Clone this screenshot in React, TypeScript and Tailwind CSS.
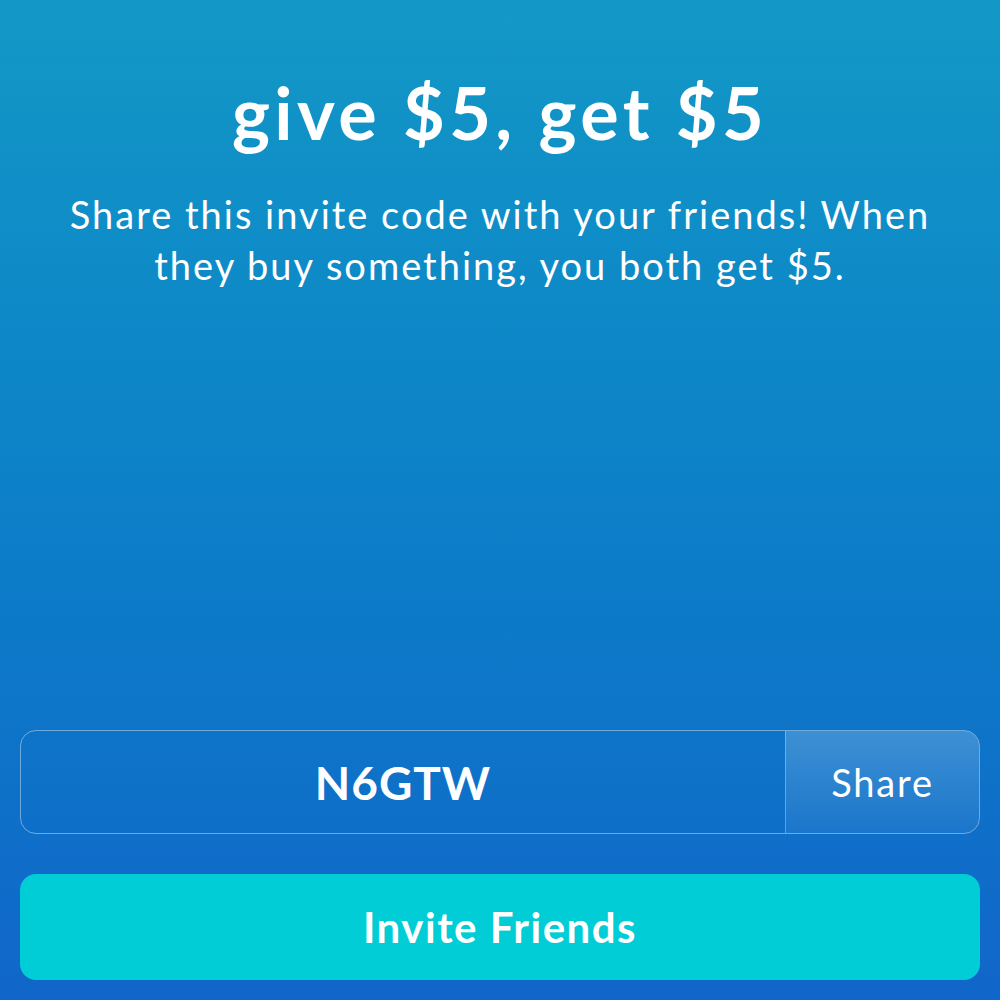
export default function App() {
  return (
    <div
      className="w-[1000px] h-[1000px] flex flex-col bg-gradient-to-b from-[#1398c6] to-[#1166c9] text-white"
      style={{ fontFamily: "Lato, 'Noto Sans', sans-serif" }}
    >
      <div className="flex flex-col items-center pt-[72px] px-[20px]">
        <h1 className="text-[72px] leading-[80px] font-bold tracking-[4.4px] whitespace-nowrap">give $5, get $5</h1>
        <p className="mt-[37px] text-[38px] leading-[51px] text-center tracking-[2px] whitespace-nowrap">
          Share this invite code with your friends! When
          <br />
          they buy something, you both get $5.
        </p>
      </div>
      <div className="flex-1" />
      <div className="px-[20px] pb-[20px] flex flex-col gap-[40px]">
        <div className="h-[104px] flex rounded-[16px] border-[1.5px] border-white/40 overflow-hidden">
          <div className="flex-1 flex items-center justify-center text-[46px] font-bold tracking-[1px]">N6GTW</div>
          <div className="w-[194px] flex items-center justify-center border-l-[1.5px] border-white/30 bg-gradient-to-b from-white/20 to-white/5 text-[38px] tracking-[1.8px]">
            Share
          </div>
        </div>
        <button className="h-[106px] rounded-[16px] bg-[#00cdd6] text-[42px] font-bold tracking-[1.5px]">
          Invite Friends
        </button>
      </div>
    </div>
  );
}
